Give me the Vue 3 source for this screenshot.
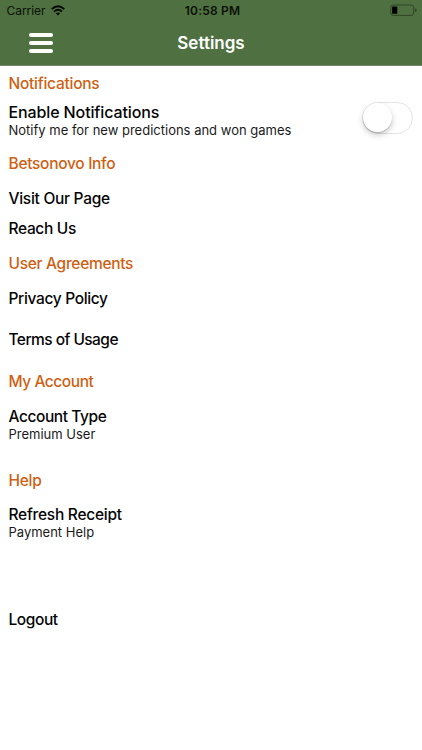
<script setup>
const groups = [
  { title: 'Notifications', id: 'notifications', items: [{ id: 'enable', label: 'Enable Notifications', note: 'Notify me for new predictions and won games', toggle: true }] },
  { title: 'Betsonovo Info', id: 'info', items: [{ id: 'visit', label: 'Visit Our Page' }, { id: 'reach', label: 'Reach Us' }] },
  { title: 'User Agreements', id: 'agreements', items: [{ id: 'privacy', label: 'Privacy Policy' }, { id: 'terms', label: 'Terms of Usage' }] },
  { title: 'My Account', id: 'account', items: [{ id: 'type', label: 'Account Type', note: 'Premium User' }] },
  { title: 'Help', id: 'help', items: [{ id: 'receipt', label: 'Refresh Receipt', note: 'Payment Help' }] },
]
</script>

<template>
  <div class="screen">
    <header class="header">
      <div class="status">
        <div class="carrier">
          <span>Carrier</span>
          <svg class="wifi" width="14" height="11" viewBox="0 0 14 11">
            <g fill="none" stroke="#050a04" stroke-width="1.9">
              <path d="M0.7 4.1Q7 -1.7 13.3 4.1" />
              <path d="M3 6.6Q7 3 11 6.6" />
            </g>
            <path d="M4.8 8.3Q7 6.6 9.2 8.3L7 10.6Z" fill="#050a04" />
          </svg>
        </div>
        <span class="time">10:58 PM</span>
        <svg class="battery" width="28" height="13" viewBox="0 0 28 13">
          <rect x="0.7" y="1" width="23" height="10.4" rx="2.4" fill="none" stroke="#304626" stroke-width="1" />
          <rect x="2.1" y="2.6" width="5.2" height="7.2" rx="0.6" fill="#000" />
          <path d="M25.1 4.3Q26.7 4.7 26.7 6.2T25.1 8.1Z" fill="#304626" />
        </svg>
      </div>
      <div class="nav">
        <button class="menu" aria-label="Menu"><i></i><i></i><i></i></button>
        <h1>Settings</h1>
      </div>
    </header>
    <main>
      <section v-for="g in groups" :key="g.id" :class="g.id">
        <h2>{{ g.title }}</h2>
        <div v-for="item in g.items" :key="item.id" class="row" :class="item.id">
          <div>
            <p class="label">{{ item.label }}</p>
            <p v-if="item.note" class="note">{{ item.note }}</p>
          </div>
          <span v-if="item.toggle" class="switch"><i></i></span>
        </div>
      </section>
      <p class="label logout">Logout</p>
    </main>
  </div>
</template>

<style>
body { margin: 0; background: #fff; }
</style>
<style scoped>
.screen { width: 422px; height: 750px; overflow: hidden; background: #fff; color: #050505; font-family: Inter, "Liberation Sans", sans-serif; }
h1, h2, p { margin: 0; }
.header { height: 66px; box-sizing: border-box; background: #4f7040; border-bottom: 1px solid #71896a; }
.status { height: 22px; display: grid; grid-template-columns: 1fr auto 1fr; align-items: center; font-size: 12px; line-height: 22px; color: #0b1008; }
.carrier { display: flex; align-items: center; gap: 5px; padding-left: 6.5px; letter-spacing: -0.05px; }
.wifi { margin: -1px 0 0 1px; }
.time { font-weight: 600; letter-spacing: 0.2px; padding-left: 3px; }
.battery { justify-self: end; margin: -1px 4px 0 0; }
.nav { height: 43px; display: grid; grid-template-columns: 1fr auto 1fr; align-items: center; }
.menu { width: 24px; margin: -1px 0 0 29px; padding: 0; border: 0; background: none; display: flex; flex-direction: column; gap: 4px; }
.menu i { height: 4px; border-radius: 2px; background: #fff; }
h1 { margin-top: -2px; font-size: 17px; font-weight: 600; line-height: 22px; color: #fff; }
main { padding: 9px 9px 0 8.5px; }
h2 { font-size: 15.5px; line-height: 18px; font-weight: 450; letter-spacing: -0.3px; color: #cf5f12; }
.notifications h2 { letter-spacing: -0.25px; }
.account h2 { letter-spacing: -0.45px; }
.row { display: flex; justify-content: space-between; align-items: flex-start; }
.label { font-size: 15.5px; line-height: 18px; font-weight: 500; letter-spacing: -0.34px; }
.note { margin-top: -1px; padding-bottom: 1px; font-size: 13px; line-height: 18px; color: #1a1a1a; }
.enable { margin-top: 10px; }
.enable .label { font-size: 16px; letter-spacing: -0.12px; }
.enable .note { margin-top: 0; }
.info { padding-top: 15px; }
.visit { margin-top: 17px; }
.visit .label { letter-spacing: -0.28px; }
.reach { margin-top: 12px; }
.agreements { padding-top: 17px; }
.privacy { margin-top: 17px; }
.terms { margin-top: 23px; }
.terms .label { letter-spacing: -0.55px; }
.account { padding-top: 24px; }
.type { margin-top: 17px; }
.type .label { letter-spacing: -0.42px; }
.help { padding-top: 28px; }
.receipt { margin-top: 16px; }
.receipt .label { letter-spacing: -0.26px; }
.logout { margin-top: 69px; letter-spacing: -0.42px; }
.switch { box-sizing: border-box; width: 51.5px; height: 32px; margin: -1px 0 -4px 0; border: 1.5px solid #e4e4e4; border-radius: 16px; }
.switch i { display: block; width: 29px; height: 29px; border-radius: 50%; background: #fff; box-shadow: 0 3px 6px rgba(0,0,0,.2), 0 1px 1px rgba(0,0,0,.18); }
</style>
